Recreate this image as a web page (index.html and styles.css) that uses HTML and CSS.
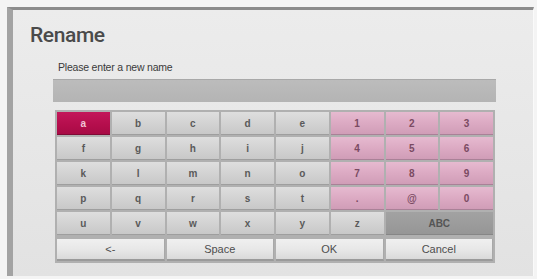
FILE: index.html
```html
<!DOCTYPE html>
<html>
<head>
<meta charset="utf-8">
<link rel="stylesheet" href="styles.css">
</head>
<body>
<div class="frame">
  <h1 class="title">Rename</h1>
  <div class="label">Please enter a new name</div>
  <div class="input"></div>
  <div class="keyboard">
    <div class="key sel">a</div>
    <div class="key">b</div>
    <div class="key">c</div>
    <div class="key">d</div>
    <div class="key">e</div>
    <div class="key num">1</div>
    <div class="key num">2</div>
    <div class="key num">3</div>
    <div class="key">f</div>
    <div class="key">g</div>
    <div class="key">h</div>
    <div class="key">i</div>
    <div class="key">j</div>
    <div class="key num">4</div>
    <div class="key num">5</div>
    <div class="key num">6</div>
    <div class="key">k</div>
    <div class="key">l</div>
    <div class="key">m</div>
    <div class="key">n</div>
    <div class="key">o</div>
    <div class="key num">7</div>
    <div class="key num">8</div>
    <div class="key num">9</div>
    <div class="key">p</div>
    <div class="key">q</div>
    <div class="key">r</div>
    <div class="key">s</div>
    <div class="key">t</div>
    <div class="key num">.</div>
    <div class="key num">@</div>
    <div class="key num">0</div>
    <div class="key">u</div>
    <div class="key">v</div>
    <div class="key">w</div>
    <div class="key">x</div>
    <div class="key">y</div>
    <div class="key">z</div>
    <div class="key abc wide">ABC</div>
    <div class="key btn wide">&lt;-</div>
    <div class="key btn wide">Space</div>
    <div class="key btn wide">OK</div>
    <div class="key btn wide">Cancel</div>
  </div>
</div>
</body>
</html>
```

FILE: styles.css
```css
html, body {
  margin: 0;
  padding: 0;
  background: #f4f4f4;
  overflow: hidden;
}
.frame {
  margin: 7px 3px 0 7px;
  height: 269px;
  border-top: 3px solid #8c8c8c;
  border-left: 6px solid #a3a3a3;
  border-right: 1px solid #fafafa;
  background: linear-gradient(180deg, #ececec 0%, #e6e6e6 60%, #e2e2e2 100%);
  box-sizing: border-box;
  overflow: hidden;
}
.title {
  margin: 0;
  padding: 13px 0 0 17px;
  font-family: Roboto, "Liberation Sans", sans-serif;
  font-weight: 500;
  font-size: 21px;
  line-height: 24px;
  letter-spacing: -0.4px;
  color: #4a4a4a;
}
.label {
  margin: 14px 0 0 45px;
  font-family: "Liberation Sans", Arial, sans-serif;
  font-size: 10.5px;
  line-height: 13px;
  color: #3a3a3a;
  letter-spacing: -0.2px;
}
.input {
  margin: 5px 0 0 40px;
  width: 443px;
  height: 23px;
  background: linear-gradient(180deg, #bcbcbc, #b4b4b4);
  border-top: 1px solid #a8a8a8;
  box-sizing: border-box;
}
.keyboard {
  margin: 8px 0 0 42px;
  width: 440px;
  padding: 2px;
  box-sizing: border-box;
  background: #b0b0b0;
  display: grid;
  grid-template-columns: repeat(8, 1fr);
  grid-template-rows: repeat(5, 23px) 24px;
  gap: 2px 2px;
  row-gap: 2px;
}
.key {
  display: flex;
  align-items: center;
  justify-content: center;
  font-family: "Liberation Sans", Arial, sans-serif;
  font-size: 10px;
  font-weight: bold;
  color: #5a5a5a;
  background: linear-gradient(180deg, #dedede 0%, #d3d3d3 50%, #c8c8c8 100%);
  border-bottom: 1px solid #9e9e9e;
  box-sizing: border-box;
}
.key.num {
  background: linear-gradient(180deg, #e6bad0 0%, #dcaac3 50%, #d09db7 100%);
  color: #7a4a62;
  border-bottom-color: #a98197;
}
.key.sel {
  background: linear-gradient(180deg, #c3175a 0%, #b40e4c 60%, #a80b45 100%);
  color: #f2c4d6;
  border-bottom-color: #7e0a35;
}
.key.abc {
  background: linear-gradient(180deg, #a2a2a2, #969696);
  color: #555;
  border-bottom-color: #868686;
}
.key.wide {
  grid-column: span 2;
}
.key.btn {
  margin-top: 2px;
  background: linear-gradient(180deg, #f0f0f0 0%, #e6e6e6 60%, #dadada 100%);
  border-bottom: 2px solid #9a9a9a;
  border-right: 1px solid #a8a8a8;
  color: #4e4e4e;
  font-weight: normal;
  font-size: 11px;
}
```
